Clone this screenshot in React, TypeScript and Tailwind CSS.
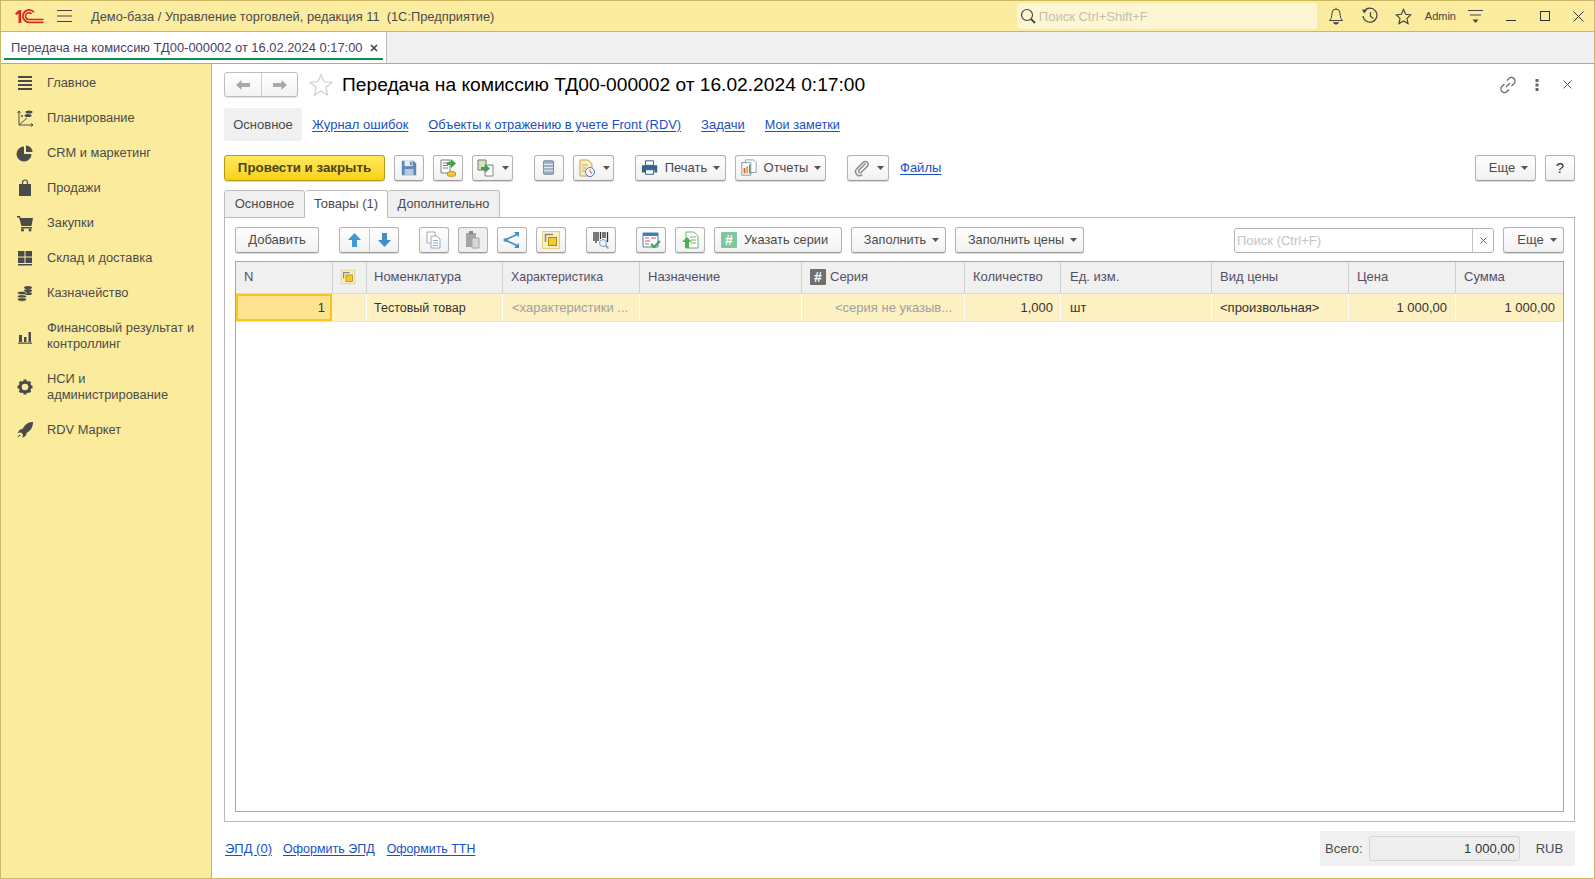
import React from 'react';

const Caret = () => (
  <svg width="7" height="4" viewBox="0 0 7 4" className="shrink-0">
    <path d="M0 0h7L3.5 4z" fill="#555" />
  </svg>
);

const Btn: React.FC<{ className?: string; children?: React.ReactNode; disabled?: boolean }> = ({ className = '', children, disabled }) => (
  <div
    className={`h-[26px] shrink-0 flex items-center justify-center gap-[6px] rounded-[3px] border border-[#b4b4b4] border-b-[#9a9a9a] shadow-[0_1px_1px_rgba(0,0,0,0.15)] text-[#4b4b4b] ${
      disabled ? 'bg-[#efefef]' : 'bg-linear-to-b from-white to-[#f1f1f1]'
    } ${className}`}
  >
    {children}
  </div>
);

const Ic: React.FC<{ s?: number; children: React.ReactNode; className?: string }> = ({ s = 20, children, className }) => (
  <svg width={s} height={s} viewBox="0 0 20 20" className={`shrink-0 ${className ?? ''}`} fill="none">
    {children}
  </svg>
);

const OverlapIcon = ({ s = 20 }: { s?: number }) => (
  <Ic s={s}>
    <rect x="1.5" y="1.5" width="17" height="17" fill="#fbefc0" stroke="#e2cf8a" />
    <path d="M4.500 12V4.500H12" stroke="#888" strokeWidth="1.500" />
    <rect x="7.500" y="7.500" width="8" height="8" fill="#f7c92d" stroke="#a98a1d" />
  </Ic>
);

const menu: { label: React.ReactNode; two?: boolean; icon: React.ReactNode }[] = [
  {
    label: 'Главное',
    icon: (
      <Ic>
        <path d="M3 3h14v2H3zM3 7h14v2H3zM3 11h14v2H3zM3 15h14v2H3z" fill="#4a4a4a" />
      </Ic>
    ),
  },
  {
    label: 'Планирование',
    icon: (
      <Ic>
        <path d="M4 3v14h14M2.500 5 4 3l1.500 2M16 15.500l2 1.500-2 1.500M4 17l8-7" stroke="#4a4a4a" />
        <ellipse cx="14" cy="4" rx="3.500" ry="1.500" fill="#4a4a4a" />
        <ellipse cx="13" cy="7.500" rx="3.500" ry="1.500" fill="#4a4a4a" />
        <circle cx="7" cy="8" r="1" fill="#4a4a4a" />
      </Ic>
    ),
  },
  {
    label: 'CRM и маркетинг',
    icon: (
      <Ic>
        <path d="M9 3.500a7.500 7.500 0 1 0 7.500 7.500H9z" fill="#4a4a4a" />
        <path d="M11 2.500a6.500 6.500 0 0 1 6.500 6.500H11z" fill="#4a4a4a" />
      </Ic>
    ),
  },
  {
    label: 'Продажи',
    icon: (
      <Ic>
        <path d="M4 6h12v12H4z" fill="#4a4a4a" />
        <path d="M7.500 9V4.500a2.500 2.500 0 0 1 5 0V9" stroke="#4a4a4a" strokeWidth="1.200" />
      </Ic>
    ),
  },
  {
    label: 'Закупки',
    icon: (
      <Ic>
        <path d="M2 3h3l.6 2H18l-1.500 8H6.500L4 4.500H2z" fill="#4a4a4a" />
        <path d="M6 14h11v1.500H6z" fill="#4a4a4a" />
        <circle cx="7.500" cy="17" r="1.500" fill="#4a4a4a" />
        <circle cx="15" cy="17" r="1.500" fill="#4a4a4a" />
      </Ic>
    ),
  },
  {
    label: 'Склад и доставка',
    icon: (
      <Ic>
        <path d="M3 3h6.500v5.500H3zM10.500 3H17v5.500h-6.500zM3 9.500h6.500V15H3zM10.500 9.500H17V15h-6.500zM3 16h14v1.500H3z" fill="#4a4a4a" />
      </Ic>
    ),
  },
  {
    label: 'Казначейство',
    icon: (
      <Ic>
        <ellipse cx="13" cy="4.500" rx="4" ry="1.600" fill="#4a4a4a" />
        <ellipse cx="13" cy="7.500" rx="4" ry="1.600" fill="#4a4a4a" />
        <ellipse cx="13" cy="10.500" rx="4" ry="1.600" fill="#4a4a4a" />
        <ellipse cx="7" cy="10" rx="4.500" ry="1.800" fill="#4a4a4a" stroke="#fbec9d" strokeWidth=".6" />
        <ellipse cx="7" cy="13.500" rx="4.500" ry="1.800" fill="#4a4a4a" stroke="#fbec9d" strokeWidth=".6" />
        <ellipse cx="7" cy="16.500" rx="4.500" ry="1.800" fill="#4a4a4a" stroke="#fbec9d" strokeWidth=".6" />
      </Ic>
    ),
  },
  {
    label: (
      <>
        Финансовый результат и
        <br />
        контроллинг
      </>
    ),
    two: true,
    icon: (
      <Ic>
        <path d="M4 9h3v7H4zM9 11h2.500v5H9zM13.500 6H16v10h-2.500zM3 16.500h14v1.200H3z" fill="#4a4a4a" />
      </Ic>
    ),
  },
  {
    label: (
      <>
        НСИ и
        <br />
        администрирование
      </>
    ),
    two: true,
    icon: (
      <Ic>
        <circle cx="10" cy="10" r="4.800" stroke="#4a4a4a" strokeWidth="3" />
        <path
          d="M10 2.500v3M10 14.500v3M2.500 10h3M14.500 10h3M4.700 4.700l2.100 2.100M13.200 13.200l2.100 2.100M4.700 15.300l2.100-2.100M13.200 6.800l2.100-2.100"
          stroke="#4a4a4a"
          strokeWidth="3"
        />
      </Ic>
    ),
  },
  {
    label: 'RDV Маркет',
    icon: (
      <Ic>
        <path d="M18 2c-5 0-8 2.500-10.500 7L5 9.500 2.500 13l3.500-.5 2 2-.5 3.500 3.500-2.500.5-2.500C16 10.500 18 7 18 2z" fill="#4a4a4a" />
        <path d="M4.500 14.500 2 18l3.500-2.500z" fill="#4a4a4a" />
      </Ic>
    ),
  },
];

const columns = [
  { w: 'w-[97px]', label: 'N', cls: 'pl-[8px]' },
  { w: 'w-[34px]', icon: true, cls: 'pl-[7px]' },
  { w: 'w-[136px]', label: 'Номенклатура', cls: 'pl-[7px]' },
  { w: 'w-[137px]', label: 'Характеристика', cls: 'pl-[8px] text-[12.400px]' },
  { w: 'w-[162px]', label: 'Назначение', cls: 'pl-[8px]' },
  { w: 'w-[163px]', label: 'Серия', hash: true, cls: 'pl-[8px]' },
  { w: 'w-[96px]', label: 'Количество', cls: 'pl-[8px]' },
  { w: 'w-[151px]', label: 'Ед. изм.', cls: 'pl-[9px]' },
  { w: 'w-[137px]', label: 'Вид цены', cls: 'pl-[8px]' },
  { w: 'w-[107px]', label: 'Цена', cls: 'pl-[8px]' },
  { w: 'flex-1', label: 'Сумма', cls: 'pl-[8px]' },
];

const cells: { text?: string; cls?: string }[] = [
  {},
  {},
  { text: 'Тестовый товар', cls: 'pl-[7px] pr-[8px] text-[#333] text-[12.500px]' },
  { text: '<характеристики ...', cls: 'pl-[9px] pr-[8px] text-[#a0a0a0]' },
  {},
  { text: '<серия не указыв...', cls: 'pl-[33px] pr-[8px] text-[#a0a0a0]' },
  { text: '1,000', cls: 'pr-[7px] text-[#333] justify-end' },
  { text: 'шт', cls: 'pl-[9px] text-[#333]' },
  { text: '<произвольная>', cls: 'pl-[8px] text-[#333]' },
  { text: '1 000,00', cls: 'pr-[8px] text-[#333] justify-end' },
  { text: '1 000,00', cls: 'pr-[8px] text-[#333] justify-end' },
];

const A: React.FC<{ children: React.ReactNode; className?: string }> = ({ children, className = '' }) => (
  <span className={`text-[#1750c4] underline underline-offset-2 ${className}`}>{children}</span>
);

export default function App() {
  return (
    <div className="h-screen w-screen flex flex-col overflow-hidden border border-[#c9b964] bg-white text-[13px] leading-4 text-[#4b4b4b] font-['Liberation_Sans',Arial,sans-serif]">
      {/* title bar */}
      <div className="h-[31px] shrink-0 flex items-center bg-[#fbec9f] border-b border-[#c9b964]">
        <svg width="30" height="15" viewBox="0 0 30 15" className="ml-[13px] shrink-0" fill="none" stroke="#d9291c">
          <path d="M1 4.500 5 1h2.200v13H4.500V4.500L2.500 6z" fill="#d9291c" stroke="none" />
          <path d="M20 3.200A6.200 6.200 0 1 0 15 13.300H29.500" strokeWidth="1.700" />
          <path d="M17.500 5A3.400 3.400 0 1 0 15 10.500H29.500" strokeWidth="1.700" />
        </svg>
        <svg width="15" height="12" viewBox="0 0 15 12" className="ml-[13px] shrink-0">
          <path d="M0 .5h15M0 6h15M0 11.500h15" stroke="#444" />
        </svg>
        <span className="ml-[19px] pt-px text-[12.850px] whitespace-pre text-[#4b4b4b]">Демо-база / Управление торговлей, редакция 11  (1С:Предприятие)</span>
        <div className="ml-auto flex items-center h-[26px] w-[300px] rounded-[3px] bg-[#fdf6d3]">
          <svg width="16" height="16" viewBox="0 0 16 16" className="ml-[3px] shrink-0">
            <circle cx="7" cy="7" r="5.500" stroke="#444" fill="none" strokeWidth="1.200" />
            <path d="m11 11 4 4" stroke="#444" strokeWidth="1.800" />
          </svg>
          <span className="ml-[3px] pt-px text-[13px] text-[#c4c0ae]">Поиск Ctrl+Shift+F</span>
        </div>
        <svg width="16" height="18" viewBox="0 0 16 18" className="ml-[11px] shrink-0">
          <path d="M8 2a4 4 0 0 0-4 4c0 4-1 6-2.500 7.500h13C13 12 12 10 12 6a4 4 0 0 0-4-4z" stroke="#444" fill="none" />
          <path d="M8 .5V2M5 15.500h6l-3 2z" stroke="#444" fill="#444" strokeWidth=".6" />
        </svg>
        <svg width="18" height="18" viewBox="0 0 18 18" className="ml-[17px] shrink-0">
          <path d="M3 4.500A7 7 0 1 1 2 9" stroke="#444" fill="none" strokeWidth="1.200" />
          <path d="M1 2.500 6 3 3 6.500z" fill="#444" />
          <path d="M9.500 5v4.500l3 2" stroke="#444" strokeWidth="1.200" fill="none" />
        </svg>
        <svg width="17" height="17" viewBox="0 0 17 17" className="ml-[16px] shrink-0">
          <path d="m8.500 1.500 2.200 4.800 5 .6-3.700 3.500 1 5.100-4.500-2.600L4 15.500l1-5.100L1.300 6.900l5-.6z" stroke="#444" fill="none" strokeWidth="1.200" />
        </svg>
        <span className="ml-[13px] text-[11px] text-[#444]">Admin</span>
        <svg width="15" height="15" viewBox="0 0 15 15" className="ml-[12px] shrink-0">
          <path d="M0 1.500h15M2 6h11" stroke="#444" />
          <path d="M4.500 10.500h6l-3 3.500z" fill="#444" />
        </svg>
        <svg width="10" height="10" viewBox="0 0 10 10" className="ml-[23px] shrink-0">
          <path d="M0 9.500h10" stroke="#333" />
        </svg>
        <svg width="10" height="10" viewBox="0 0 10 10" className="ml-[24px] shrink-0">
          <rect x=".5" y=".5" width="9" height="9" stroke="#333" strokeWidth="1" fill="none" />
        </svg>
        <svg width="11" height="11" viewBox="0 0 11 11" className="ml-[23px] mr-[10px] shrink-0">
          <path d="m.5.500 10 10M10.500.500l-10 10" stroke="#333" />
        </svg>
      </div>

      {/* open windows */}
      <div className="h-[32px] shrink-0 flex bg-[#f0f0f0] border-b border-[#a8a8a8]">
        <div className="w-[386px] relative flex items-center bg-white border-r border-[#bdbdbd] pl-[10px] text-[#4b4265]">
          <span className="text-[12.900px] whitespace-nowrap">Передача на комиссию ТД00-000002 от 16.02.2024 0:17:00</span>
          <svg width="8" height="8" viewBox="0 0 8 8" className="ml-[8px] shrink-0">
            <path d="m1 1 6 6M7 1 1 7" stroke="#444" strokeWidth="1.600" />
          </svg>
          <div className="absolute left-[3px] right-[3px] bottom-[3px] h-[2px] bg-[#0a8f4d]" />
        </div>
      </div>

      <div className="flex-1 min-h-0 flex">
        {/* sidebar */}
        <div className="w-[211px] shrink-0 bg-[#fbec9d] border-r border-[#c9b964] pt-px text-[12.850px]">
          {menu.map((m, i) => (
            <div key={i} className={`flex items-center ${m.two ? 'h-[51px]' : 'h-[35px]'}`}>
              <div className="w-[46px] shrink-0 flex justify-center pl-[2px]">{m.icon}</div>
              <span className="leading-4 text-[#4b4b4b] whitespace-nowrap">{m.label}</span>
            </div>
          ))}
        </div>

        {/* form */}
        <div className="flex-1 min-w-0 flex flex-col pl-[12px] pr-[19px] pt-[8px]">
          <div className="flex items-center h-[25px]">
            <div className="w-[74px] h-[25px] flex rounded-[3px] border border-[#bdbdbd] shadow-[0_1px_1px_rgba(0,0,0,0.12)] bg-linear-to-b from-white to-[#f3f3f3]">
              <div className="w-[37px] flex items-center justify-center border-r border-[#cfcfcf]">
                <svg width="14" height="10" viewBox="0 0 14 10">
                  <path d="M0 5 5.500 0v3H14v4H5.500v3z" fill="#a8a8a8" />
                </svg>
              </div>
              <div className="flex-1 flex items-center justify-center">
                <svg width="14" height="10" viewBox="0 0 14 10">
                  <path d="M14 5 8.500 0v3H0v4h8.500v3z" fill="#a8a8a8" />
                </svg>
              </div>
            </div>
            <svg width="24" height="24" viewBox="0 0 24 24" className="ml-[11px] shrink-0">
              <path d="m12 1.500 3 7.300 7.800.6-6 5.100 1.900 7.700-6.700-4.200-6.700 4.200 1.900-7.700-6-5.100 7.800-.6z" fill="#fff" stroke="#cfcfcf" strokeWidth="1.200" />
            </svg>
            <span className="ml-[9px] text-[19.200px] text-black whitespace-nowrap">Передача на комиссию ТД00-000002 от 16.02.2024 0:17:00</span>
            <svg width="18" height="18" viewBox="0 0 18 18" className="ml-auto shrink-0" fill="none" stroke="#666" strokeWidth="1.200">
              <path d="m7 11 4-4M8 4.500l2-2a3 3 0 0 1 5 5l-2.500 2.500M10 13.500l-2 2a3 3 0 0 1-5-5L5.500 8" />
            </svg>
            <svg width="4" height="14" viewBox="0 0 4 14" className="ml-[18px] shrink-0">
              <path d="M.5 1h3v3h-3zM.5 5.500h3v3h-3zM.5 10h3v3h-3z" fill="#666" />
            </svg>
            <svg width="9" height="9" viewBox="0 0 9 9" className="ml-[24px] mr-[3px] shrink-0">
              <path d="m.5.500 8 8M8.500.500l-8 8" stroke="#555" />
            </svg>
          </div>

          {/* form navigation */}
          <div className="mt-[11px] flex items-center h-[33px]">
            <div className="h-full w-[78px] flex items-center justify-center bg-[#f0f0f0] rounded-[3px]">Основное</div>
            <A className="ml-[10px]">Журнал ошибок</A>
            <A className="ml-[20px] text-[12.900px]">Объекты к отражению в учете Front (RDV)</A>
            <A className="ml-[20px]">Задачи</A>
            <A className="ml-[20px] text-[12.700px]">Мои заметки</A>
          </div>

          {/* command bar */}
          <div className="mt-[14px] flex items-center">
            <div className="w-[161px] h-[26px] shrink-0 flex items-center justify-center rounded-[3px] border border-[#b09a17] bg-linear-to-b from-[#ffe95a] to-[#f9d100] font-bold text-[13.300px] text-[#4b4318] shadow-[0_1px_1px_rgba(0,0,0,0.15)]">
              Провести и закрыть
            </div>
            <Btn className="ml-[9px] w-[30px]">
              <Ic s={18}>
                <path d="M2 2h13l3 3v13H2z" fill="#5b86b5" />
                <path d="M5 2h9v6H5z" fill="#e9eef5" />
                <path d="M5 11h10v7H5z" fill="#b7c8dc" />
                <path d="M11 3h2v4h-2z" fill="#5b86b5" />
              </Ic>
            </Btn>
            <Btn className="ml-[9px] w-[30px]">
              <Ic s={20}>
                <path d="M3 2h9v13H3z" fill="#fff" stroke="#7d7d7d" />
                <path d="M5 5h5M5 7.500h5M5 10h5" stroke="#7d7d7d" />
                <path d="M9 4h4V1l5 4.500-5 4.500V7H9z" fill="#3ba549" />
                <ellipse cx="13.500" cy="15" rx="4" ry="1.500" fill="#f0c63a" stroke="#b99520" />
                <path d="M9.500 15v2.500c0 1 8 1 8 0V15" fill="#f0c63a" stroke="#b99520" />
              </Ic>
            </Btn>
            <Btn className="ml-[9px] w-[41px]">
              <Ic s={20}>
                <path d="M2 2h8v10H2z" fill="#d6e3c8" stroke="#6d7d62" />
                <path d="M9 7h8v11H9z" fill="#fff" stroke="#7d8a8a" />
                <path d="M5 9h4V6l5 4.500-5 4.500v-3H5z" fill="#3ba549" />
              </Ic>
              <Caret />
            </Btn>
            <Btn className="ml-[21px] w-[30px]">
              <Ic s={18}>
                <rect x="4" y="2" width="11" height="15" rx="1" fill="#9fb2c4" stroke="#68819a" />
                <path d="M4.500 6h10M4.500 9.500h10M4.500 13h10" stroke="#f2f5f8" />
              </Ic>
            </Btn>
            <Btn className="ml-[9px] w-[41px]">
              <Ic s={20}>
                <path d="M3 2h8l4 4v12H3z" fill="#fbedc0" stroke="#bda55b" />
                <path d="M5 7h6M5 10h4M5 13h3" stroke="#bda55b" />
                <circle cx="13" cy="14" r="4.500" fill="#fff" stroke="#4b7dc0" />
                <path d="M13 11.500V14l2 1" stroke="#d33" />
              </Ic>
              <Caret />
            </Btn>
            <Btn className="ml-[21px] w-[91px]">
              <Ic s={18}>
                <path d="M5 2h9v5H5z" fill="#fff" stroke="#274f72" />
                <path d="M1 7h17v8h-3v-3H5v3H1z" fill="#34648e" />
                <path d="M5 12h9v5H5z" fill="#fff" stroke="#274f72" />
              </Ic>
              <span className="whitespace-nowrap">Печать</span>
              <Caret />
            </Btn>
            <Btn className="ml-[9px] w-[91px]">
              <Ic s={18}>
                <path d="M6 1h9l3 3v11H6z" fill="#fff" stroke="#8a9aa5" />
                <path d="M2 4h10v14H2z" fill="#fff" stroke="#7d8d98" />
                <path d="M4 10h2v6H4z" fill="#d9534f" />
                <path d="M7 8h2v8H7z" fill="#e0a030" />
                <path d="M10 6h1.500v10H10z" fill="#3ba549" />
              </Ic>
              <span className="whitespace-nowrap">Отчеты</span>
              <Caret />
            </Btn>
            <Btn className="ml-[21px] w-[42px]">
              <Ic s={18}>
                <path d="m14 5-7.500 7.500a1.800 1.800 0 0 0 2.500 2.500L16 8a3.200 3.200 0 0 0-4.500-4.500L4 11a4.500 4.500 0 0 0 6.400 6.300" stroke="#8a8a8a" strokeWidth="1.600" />
              </Ic>
              <Caret />
            </Btn>
            <A className="ml-[11px]">Файлы</A>
            <Btn className="ml-auto w-[61px] pl-[6px]">
              <span>Еще</span>
              <Caret />
            </Btn>
            <Btn className="ml-[9px] w-[30px] text-[#333] text-[15px]">?</Btn>
          </div>

          {/* page tabs */}
          <div className="mt-[9px] flex h-[28px] relative z-10 -mb-px">
            <div className="w-[81px] flex items-center justify-center bg-[#f0f0f0] border border-[#bdbdbd] rounded-t-[3px]">Основное</div>
            <div className="w-[83px] flex items-center justify-center bg-white border border-[#bdbdbd] border-b-white border-l-0 rounded-t-[3px]">Товары (1)</div>
            <div className="w-[112px] flex items-center justify-center bg-[#f0f0f0] border border-[#bdbdbd] border-l-0 rounded-t-[3px] text-[12.750px]">Дополнительно</div>
          </div>

          {/* page */}
          <div className="h-[605px] shrink-0 flex flex-col border border-[#b8b8b8] px-[10px] pt-[9px] pb-[9px]">
            <div className="flex items-center">
              <Btn className="w-[84px]">Добавить</Btn>
              <div className="ml-[20px] w-[60px] h-[26px] shrink-0 flex rounded-[3px] border border-[#b4b4b4] border-b-[#9a9a9a] shadow-[0_1px_1px_rgba(0,0,0,0.15)] bg-linear-to-b from-white to-[#f1f1f1]">
                <div className="w-[30px] flex items-center justify-center border-r border-[#c8c8c8]">
                  <svg width="13" height="14" viewBox="0 0 13 14">
                    <path d="M6.500 0 13 7H9v7H4V7H0z" fill="#3f97d6" />
                  </svg>
                </div>
                <div className="flex-1 flex items-center justify-center">
                  <svg width="13" height="14" viewBox="0 0 13 14">
                    <path d="M6.500 14 13 7H9V0H4v7H0z" fill="#3f8ed0" />
                  </svg>
                </div>
              </div>
              <Btn className="ml-[20px] w-[30px]">
                <Ic s={20}>
                  <path d="M3 2h8v11H3z" fill="#fff" stroke="#93adc2" />
                  <path d="M7 6h6l3 3v9H7z" fill="#fff" stroke="#93adc2" />
                  <path d="M9 10.500h5M9 13h5M9 15.500h5" stroke="#93adc2" />
                </Ic>
              </Btn>
              <Btn className="ml-[9px] w-[30px]" disabled>
                <Ic s={20}>
                  <path d="M3 3h10v14H3z" fill="#a5a5a5" />
                  <path d="M6 1h4v3H6z" fill="#8a8a8a" />
                  <path d="M9 8h7v10H9z" fill="#d8d8d8" stroke="#a5a5a5" />
                </Ic>
              </Btn>
              <Btn className="ml-[9px] w-[30px]">
                <Ic s={20}>
                  <path d="M15 4.500 3 10l12 5.500" stroke="#3f8ed0" strokeWidth="1.800" />
                  <path d="M12 2h5v5zM12 18h5v-5z" fill="#3f8ed0" />
                  <circle cx="3.500" cy="10" r="1.800" fill="#3f8ed0" />
                </Ic>
              </Btn>
              <Btn className="ml-[9px] w-[30px]">
                <OverlapIcon />
              </Btn>
              <Btn className="ml-[20px] w-[30px]">
                <Ic s={20}>
                  <path d="M3 2v9M5 2v11M7 2v9M9.500 2v7M12 2v6M14 2v6M16.500 2v10" stroke="#333" strokeWidth="1.300" />
                  <circle cx="12" cy="13" r="3.500" fill="#e8f2fa" stroke="#7aa5c8" />
                  <path d="m14.500 15.500 3 3" stroke="#b58a4a" strokeWidth="1.500" />
                </Ic>
              </Btn>
              <Btn className="ml-[20px] w-[30px]">
                <Ic s={20}>
                  <path d="M2 3h15v14H2z" fill="#fff" stroke="#4c7cad" />
                  <path d="M2 3h15v3H2z" fill="#3f7cc0" />
                  <path d="M4 8h4M4 11h5M4 14h4M10 8h5" stroke="#d9534f" />
                  <path d="m10 14 3 3 6-6" stroke="#3ba549" strokeWidth="2.200" />
                </Ic>
              </Btn>
              <Btn className="ml-[9px] w-[30px]">
                <Ic s={20}>
                  <path d="M6 2h8l4 4v12H6z" fill="#fff" stroke="#71b071" />
                  <path d="M10 7h6M11 10h5M11 13h5" stroke="#71b071" />
                  <path d="M7 7 2 12h3v6h4v-6h3z" fill="#4eb04e" />
                </Ic>
              </Btn>
              <Btn className="ml-[9px] w-[128px] justify-start pl-[6px] gap-[7px] text-[12.800px]">
                <div className="w-[16px] h-[16px] rounded-[1px] bg-[#7fc79c] text-white flex items-center justify-center font-bold text-[14px]">#</div>
                <span className="whitespace-nowrap">Указать серии</span>
              </Btn>
              <Btn className="ml-[9px] w-[95px] pl-[6px] text-[12.700px]">
                <span className="whitespace-nowrap">Заполнить</span>
                <Caret />
              </Btn>
              <Btn className="ml-[9px] w-[129px] pl-[6px] text-[12.700px]">
                <span className="whitespace-nowrap">Заполнить цены</span>
                <Caret />
              </Btn>
              <div className="ml-auto w-[260px] h-[25px] flex rounded-[3px] border border-[#b4b4b4] bg-white">
                <span className="flex-1 pl-[2px] leading-[23px] text-[#c4c4c4]">Поиск (Ctrl+F)</span>
                <div className="w-[21px] flex items-center justify-center border-l border-[#c4c4c4]">
                  <svg width="7" height="7" viewBox="0 0 7 7">
                    <path d="m.5.500 6 6M6.500.500l-6 6" stroke="#666" />
                  </svg>
                </div>
              </div>
              <Btn className="ml-[9px] w-[61px] pl-[7px]">
                <span>Еще</span>
                <Caret />
              </Btn>
            </div>

            {/* goods table */}
            <div className="mt-[8px] flex-1 min-h-0 border border-[#a8a8a8] flex flex-col">
              <div className="h-[32px] shrink-0 flex bg-[#f0f0f0] border-b border-[#d8d8d8]">
                {columns.map((c, i) => (
                  <div key={i} className={`${c.w} shrink-0 flex items-center pb-px gap-[4px] border-r border-[#cfcfcf] last:border-r-0 text-[#554f66] ${c.cls ?? ''}`}>
                    {c.icon && <OverlapIcon s={16} />}
                    {c.hash && (
                      <div className="w-[16px] h-[16px] rounded-[1px] bg-[#6f6f6f] text-white flex items-center justify-center font-bold text-[14px]">#</div>
                    )}
                    {c.label}
                  </div>
                ))}
              </div>
              <div className="h-[28px] shrink-0 flex bg-[#fdf0c2] border-b border-[#e2e2e2]">
                <div className="w-[96px] mr-px shrink-0 flex items-center justify-end pr-[5px] bg-[#fde38f] border-2 border-[#f9c519] text-[#333]">1</div>
                {cells.slice(1).map((c, i) => (
                  <div key={i} className={`${columns[i + 1].w} shrink-0 flex items-center border-r border-white last:border-r-0 whitespace-nowrap overflow-hidden ${c.cls ?? ''}`}>
                    {c.text}
                  </div>
                ))}
              </div>
            </div>
          </div>

          {/* footer */}
          <div className="mt-[9px] flex items-center">
            <A className="ml-[1px]">ЭПД (0)</A>
            <A className="ml-[11px] text-[12.500px]">Оформить ЭПД</A>
            <A className="ml-[12px] text-[12.400px]">Оформить ТТН</A>
            <div className="ml-auto w-[255px] h-[35px] flex items-center bg-[#f0f0f0] pl-[5px]">
              <span>Всего:</span>
              <div className="ml-[6px] w-[151px] h-[25px] flex items-center justify-end pr-[4px] rounded-[3px] border border-[#d5d5d5] bg-[#eeeeee] text-[#333]">1 000,00</div>
              <span className="ml-[16px]">RUB</span>
            </div>
          </div>
        </div>
      </div>
    </div>
  );
}
